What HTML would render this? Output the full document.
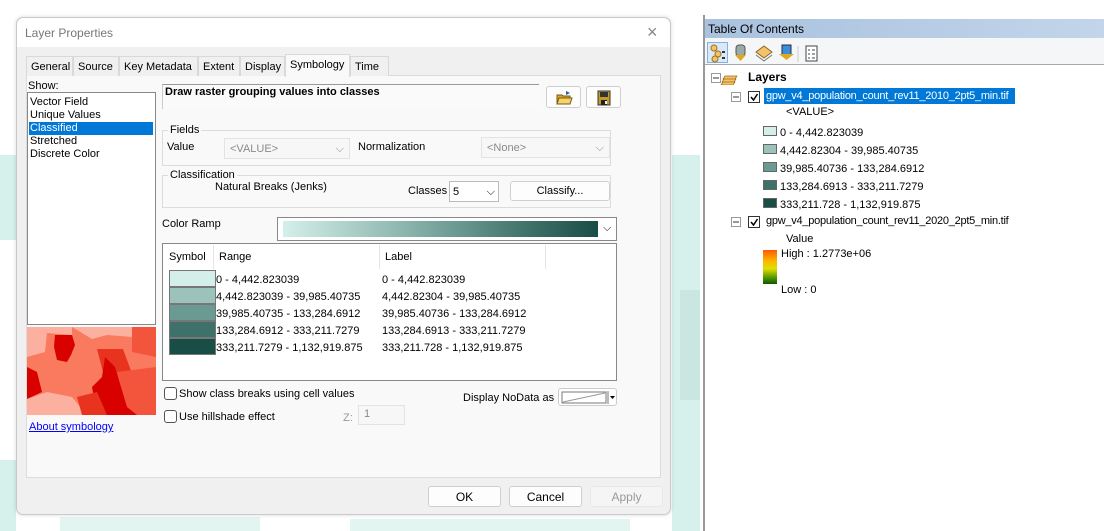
<!DOCTYPE html>
<html><head><meta charset="utf-8"><style>
*{box-sizing:border-box;margin:0;padding:0}
body{width:1104px;height:531px;position:relative;overflow:hidden;background:#fff;font-family:"Liberation Sans",sans-serif;font-size:11px;color:#000}
.a{position:absolute;white-space:nowrap}
.m{position:absolute;background:#d6f0eb}
.tab{position:absolute;top:56px;height:20px;border:1px solid #d9d9d9;border-bottom:none;background:#f0f0f0;padding:4px 0 0 4px;font-size:11px}
.grp{position:absolute;border:1px solid #dcdcdc}
.cb{position:absolute;border:1px solid #e3e3e3;background:#f7f7f7;color:#8a8a8a;padding:4px 5px;font-size:11px}
.btn{position:absolute;border:1px solid #cfcfcf;border-radius:3px;background:#fdfdfd;text-align:center;font-size:12px;padding-top:3px}
.sw{position:absolute;left:169px;width:47px;height:17px;border:1px solid #777}
.chk{position:absolute;width:13px;height:13px;border:1px solid #555;border-radius:3px;background:#fff}
.ts{position:absolute;left:763px;width:14px;height:10px;border:1px solid #666}
</style></head><body>
<!-- map background -->
<div class="m" style="left:0;top:155px;width:16px;height:85px"></div>
<div class="m" style="left:0;top:460px;width:16px;height:71px"></div>
<div class="m" style="left:60px;top:517px;width:200px;height:14px;background:#e3f5f1"></div>
<div class="m" style="left:350px;top:519px;width:280px;height:12px;background:#e3f5f1"></div>
<div class="m" style="left:672px;top:155px;width:28px;height:376px"></div>
<div class="m" style="left:680px;top:290px;width:20px;height:110px;background:#c9e6e0"></div>

<!-- dialog -->
<div class="a" style="left:16px;top:17px;width:655px;height:498px;border:1px solid #c9c9c9;border-radius:7px;background:#f0f0f0;box-shadow:0 0 4px rgba(0,0,0,.15)"></div>
<div class="a" style="left:17px;top:18px;width:653px;height:29px;background:#fff;border-radius:7px 7px 0 0"></div>
<div class="a" style="left:25px;top:26px;font-size:12px;color:#777">Layer Properties</div>
<div class="a" style="left:647px;top:22px;font-size:18px;color:#888">×</div>

<div class="a" style="left:26px;top:75px;width:635px;height:403px;background:#f9f9f9;border:1px solid #dcdcdc"></div>
<div class="tab" style="left:26px;width:47px">General</div>
<div class="tab" style="left:73px;width:46px">Source</div>
<div class="tab" style="left:119px;width:79px">Key Metadata</div>
<div class="tab" style="left:198px;width:42px">Extent</div>
<div class="tab" style="left:240px;width:45px">Display</div>
<div class="tab" style="left:285px;top:54px;height:23px;width:65px;background:#f9f9f9;padding-top:4px">Symbology</div>
<div class="tab" style="left:350px;width:39px">Time</div>

<div class="a" style="left:28px;top:80px">Show:</div>
<div class="a" style="left:27px;top:92px;width:129px;height:233px;background:#fff;border:1px solid #888"></div>
<div class="a" style="left:30px;top:96px;line-height:13px">Vector Field<br>Unique Values<br><span style="display:inline-block;width:124px;background:#0078d7;color:#fff;margin-left:-1px;padding-left:1px">Classified</span><br>Stretched<br>Discrete Color</div>
<svg class="a" style="left:27px;top:327px" width="129" height="88" viewBox="0 0 129 88">
<rect width="129" height="88" fill="#f97a5e"/>
<path d="M0 0H45V8L20 6 18 25 0 30Z" fill="#fcb0a0"/>
<path d="M45 0H129V18L105 10 80 8 65 12Z" fill="#fcb0a0"/>
<path d="M105 0H129V30L105 25Z" fill="#f2553c"/>
<path d="M28 8H45L48 18 44 28 40 35 30 33 27 20Z" fill="#d90000"/>
<path d="M70 22H96L110 60 115 88H85L80 60Z" fill="#e8341f"/>
<path d="M90 45 129 40V88H100Z" fill="#f2553c"/>
<path d="M0 40 10 45 15 65 0 72Z" fill="#d90000"/>
<path d="M78 30 88 40 100 80 110 88H70L65 60 75 50Z" fill="#d90000"/>
<path d="M0 72 20 65 45 70 60 88H0Z" fill="#fcb0a0"/>
<path d="M50 70 70 65 80 88H55Z" fill="#e8341f"/>
</svg>
<div class="a" style="left:29px;top:421px;color:#00f;text-decoration:underline">About symbology</div>

<div class="a" style="left:162px;top:84px;width:377px;height:25px;border-top:1px solid #999;border-left:1px solid #ccc;background:#fafafa;padding:1px 2px;font-weight:bold">Draw raster grouping values into classes</div>
<div class="btn" style="left:546px;top:86px;width:35px;height:22px"><svg width="18" height="16" viewBox="0 0 18 16"><path d="M2 5h5l1 1h7v8H2z" fill="#d9a52b" stroke="#7a5a10"/><path d="M2 14l2-6h13l-2 6z" fill="#f5d36a" stroke="#7a5a10"/><path d="M11 1l4 2-4 2z" fill="#1e5fb0"/></svg></div>
<div class="btn" style="left:586px;top:86px;width:35px;height:22px"><svg width="16" height="16" viewBox="0 0 16 16"><rect x="2" y="1" width="12" height="14" fill="#c49a2b" stroke="#333"/><rect x="4" y="2" width="8" height="5" fill="#333"/><rect x="5" y="10" width="6" height="5" fill="#222"/><rect x="9" y="11" width="2" height="3" fill="#eee"/></svg></div>

<div class="grp" style="left:162px;top:130px;width:449px;height:36px"></div>
<div class="a" style="left:168px;top:124px;background:#f9f9f9;padding:0 2px">Fields</div>
<div class="a" style="left:167px;top:141px">Value</div>
<div class="cb" style="left:224px;top:138px;width:126px;height:21px">&lt;VALUE&gt;<span style="float:right">⌵</span></div>
<div class="a" style="left:358px;top:141px">Normalization</div>
<div class="cb" style="left:481px;top:137px;width:129px;height:21px">&lt;None&gt;<span style="float:right">⌵</span></div>

<div class="grp" style="left:162px;top:175px;width:449px;height:33px"></div>
<div class="a" style="left:168px;top:169px;background:#f9f9f9;padding:0 2px">Classification</div>
<div class="a" style="left:215px;top:181px">Natural Breaks (Jenks)</div>
<div class="a" style="left:408px;top:185px">Classes</div>
<div class="a" style="left:449px;top:181px;width:50px;height:21px;border:1px solid #bbb;background:#fff;padding:4px 3px">5<span style="float:right">⌵</span></div>
<div class="btn" style="left:510px;top:181px;width:100px;height:20px;font-size:11px;padding-top:3px">Classify...</div>

<div class="a" style="left:162px;top:218px">Color Ramp</div>
<div class="a" style="left:277px;top:217px;width:340px;height:24px;border:1px solid #888;background:#fff"></div>
<div class="a" style="left:283px;top:221px;width:315px;height:16px;background:linear-gradient(90deg,#d4efea,#9cc3bb 30%,#6b9a92 55%,#3e7169 78%,#194e47)"></div>
<div class="a" style="left:603px;top:222px;font-size:11px">⌵</div>

<div class="a" style="left:162px;top:243px;width:455px;height:138px;border:1px solid #888;background:#fff"></div>
<div class="a" style="left:213px;top:245px;width:1px;height:24px;background:#e5e5e5"></div>
<div class="a" style="left:379px;top:245px;width:1px;height:24px;background:#e5e5e5"></div>
<div class="a" style="left:545px;top:245px;width:1px;height:24px;background:#e5e5e5"></div>
<div class="a" style="left:169px;top:251px">Symbol</div>
<div class="a" style="left:219px;top:251px">Range</div>
<div class="a" style="left:385px;top:251px">Label</div>
<div class="sw" style="top:270px;background:#d4efea"></div>
<div class="sw" style="top:287px;background:#9cc3bb"></div>
<div class="sw" style="top:304px;background:#6b9a92"></div>
<div class="sw" style="top:321px;background:#3e7169"></div>
<div class="sw" style="top:338px;background:#194e47"></div>
<div class="a" style="left:216px;top:272px;line-height:17px">0 - 4,442.823039<br>4,442.823039 - 39,985.40735<br>39,985.40735 - 133,284.6912<br>133,284.6912 - 333,211.7279<br>333,211.7279 - 1,132,919.875</div>
<div class="a" style="left:382px;top:272px;line-height:17px">0 - 4,442.823039<br>4,442.82304 - 39,985.40735<br>39,985.40736 - 133,284.6912<br>133,284.6913 - 333,211.7279<br>333,211.728 - 1,132,919.875</div>

<div class="chk" style="left:164px;top:387px"></div>
<div class="a" style="left:179px;top:388px">Show class breaks using cell values</div>
<div class="chk" style="left:164px;top:410px"></div>
<div class="a" style="left:179px;top:411px">Use hillshade effect</div>
<div class="a" style="left:343px;top:412px;color:#999">Z:</div>
<div class="a" style="left:358px;top:405px;width:47px;height:20px;border:1px solid #e3e3e3;background:#f7f7f7;color:#888;padding:2px 5px">1</div>
<div class="a" style="left:463px;top:392px">Display NoData as</div>
<div class="a" style="left:558px;top:388px;width:59px;height:18px;border:1px solid #ccc;border-radius:3px;background:#fff"><svg width="57" height="16" style="position:absolute;left:0;top:0"><rect x="3" y="3" width="44" height="11" fill="#fff" stroke="#777"/><path d="M4 13L46 4" stroke="#999"/><path d="M49 2V15" stroke="#777"/><path d="M51 7h5l-2.5 3z" fill="#000"/></svg></div>

<div class="btn" style="left:428px;top:486px;width:73px;height:21px">OK</div>
<div class="btn" style="left:509px;top:486px;width:73px;height:21px">Cancel</div>
<div class="btn" style="left:590px;top:486px;width:73px;height:21px;color:#999;border-color:#e8e8e8;background:#f5f5f5">Apply</div>

<!-- TOC -->
<div class="a" style="left:703px;top:15px;width:401px;height:516px;border-left:2px solid #999;background:#fff"></div>
<div class="a" style="left:705px;top:19px;width:399px;height:19px;background:linear-gradient(90deg,#a9c2de,#c2d5ea)"></div>
<div class="a" style="left:708px;top:22px;font-size:12px">Table Of Contents</div>
<div class="a" style="left:705px;top:38px;width:399px;height:27px;background:#f4f6f8;border-bottom:1px solid #aaa"></div>
<div class="a" style="left:707px;top:42px;width:21px;height:21px;border:1px solid #7fb2e5;background:#dbe9f7"></div>
<svg class="a" style="left:707px;top:42px" width="120" height="22"><circle cx="7" cy="6" r="3" fill="#f2c36b" stroke="#a07020"/><circle cx="11" cy="12" r="3" fill="#f2c36b" stroke="#a07020"/><circle cx="8" cy="17" r="3" fill="#f2c36b" stroke="#a07020"/><rect x="15" y="9" width="3" height="2" fill="#333"/><rect x="15" y="15" width="3" height="2" fill="#333"/>
<rect x="29" y="3" width="9" height="11" rx="3" fill="#9aa" stroke="#555"/><path d="M28 13h11l-5.5 6z" fill="#e5a520"/>
<path d="M57 4l8 6-8 6-8-6z" fill="#f2c36b" stroke="#8a6a20"/><path d="M49 13l8 6 8-6" fill="none" stroke="#777"/>
<rect x="75" y="3" width="9" height="10" fill="#3b8fd8" stroke="#234"/><path d="M72 12h15l-7.5 6z" fill="#e5a520"/>
<path d="M91 4v16" stroke="#ccc"/><rect x="99" y="4" width="11" height="15" fill="#fff" stroke="#444"/><path d="M101 8h2M105 8h3M101 12h2M105 12h3M101 16h2M105 16h3" stroke="#444"/></svg>

<svg class="a" style="left:711px;top:71px" width="30" height="14"><rect x="0.5" y="2.5" width="9" height="9" fill="#fff" stroke="#999"/><path d="M2 7h6" stroke="#333"/><path d="M14 5h12l-2 3H12zM13 8h12l-2 3H11zM12 11h12l-2 3H10z" fill="#f2c36b" stroke="#a06a10" stroke-width=".7"/></svg>
<div class="a" style="left:748px;top:70px;font-weight:bold;font-size:12px">Layers</div>
<svg class="a" style="left:731px;top:90px" width="30" height="14"><rect x="0.5" y="2.5" width="9" height="9" fill="#fff" stroke="#999"/><path d="M2 7h6" stroke="#333"/><rect x="17.5" y="1.5" width="11" height="11" fill="#fff" stroke="#333"/><path d="M20 7l2.5 3 4-6" fill="none" stroke="#000" stroke-width="1.5"/></svg>
<div class="a" style="left:764px;top:88px;width:251px;height:16px;background:#0078d7;color:#fff;padding:2px 2px;font-size:11px;letter-spacing:-0.25px;overflow:hidden">gpw_v4_population_count_rev11_2010_2pt5_min.tif</div>
<div class="a" style="left:786px;top:106px">&lt;VALUE&gt;</div>
<div class="ts" style="top:126px;background:#d4efea"></div>
<div class="ts" style="top:144px;background:#9cc3bb"></div>
<div class="ts" style="top:162px;background:#6b9a92"></div>
<div class="ts" style="top:180px;background:#3e7169"></div>
<div class="ts" style="top:198px;background:#194e47"></div>
<div class="a" style="left:780px;top:124px;line-height:18px">0 - 4,442.823039<br>4,442.82304 - 39,985.40735<br>39,985.40736 - 133,284.6912<br>133,284.6913 - 333,211.7279<br>333,211.728 - 1,132,919.875</div>
<svg class="a" style="left:731px;top:215px" width="30" height="14"><rect x="0.5" y="2.5" width="9" height="9" fill="#fff" stroke="#999"/><path d="M2 7h6" stroke="#333"/><rect x="17.5" y="1.5" width="11" height="11" fill="#fff" stroke="#333"/><path d="M20 7l2.5 3 4-6" fill="none" stroke="#000" stroke-width="1.5"/></svg>
<div class="a" style="left:766px;top:215px;font-size:11px;letter-spacing:-0.25px">gpw_v4_population_count_rev11_2020_2pt5_min.tif</div>
<div class="a" style="left:786px;top:233px">Value</div>
<div class="a" style="left:763px;top:250px;width:14px;height:34px;background:linear-gradient(#ff5a00,#ffb000 30%,#e0e000 55%,#5a9a00 80%,#0b5a00)"></div>
<div class="a" style="left:781px;top:248px">High : 1.2773e+06</div>
<div class="a" style="left:781px;top:284px">Low : 0</div>
</body></html>
